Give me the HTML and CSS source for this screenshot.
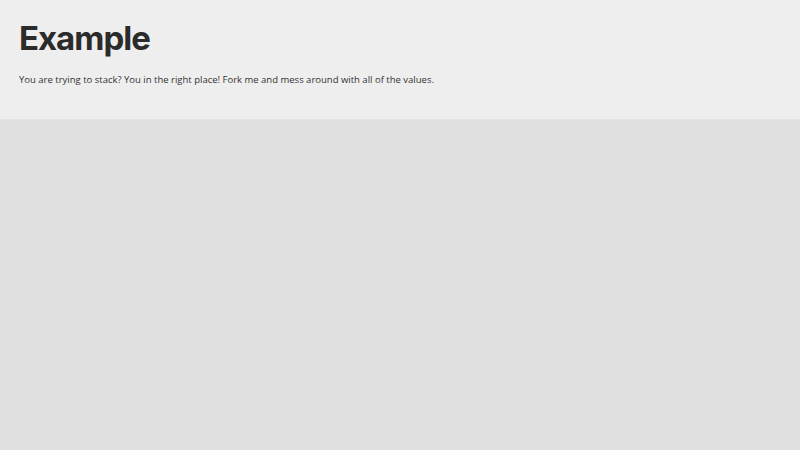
FILE: index.html
```html
<!DOCTYPE html>
<html>
<head>
<meta charset="utf-8">
<link rel="stylesheet" href="styles.css">
</head>
<body>
<header class="header">
  <h1 class="title">Example</h1>
  <p class="lead">You are trying to stack? You in the right place! Fork me and mess around with all of the values.</p>
</header>
<main class="main"></main>
</body>
</html>
```
FILE: styles.css
```css
html, body {
  margin: 0;
  padding: 0;
  height: 100%;
}
body {
  background: #e0e0e0;
  color: #333;
  font-family: "Open Sans", sans-serif;
}
.header {
  background: #eeeeee;
  border-bottom: 1px solid #e4e4e4;
  padding: 19px 19px 0;
  height: 100px;
}
.title {
  margin: 0;
  font-family: "Inter", sans-serif;
  font-weight: 700;
  font-size: 33px;
  line-height: 38px;
  color: #2b2b2b;
  letter-spacing: -1px;
}
.lead {
  margin: 16px 0 0;
  font-size: 9.5px;
  line-height: 14px;
  color: #333;
}
```
